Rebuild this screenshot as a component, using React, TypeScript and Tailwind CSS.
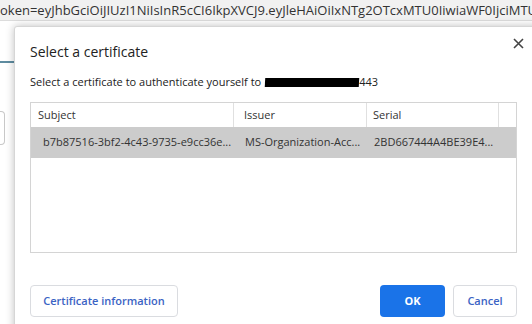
import React from 'react'

const font = { fontFamily: '"Open Sans", "Noto Sans", sans-serif' }

function CloseIcon() {
  return (
    <svg width="11" height="11" viewBox="0 0 11 11">
      <path d="M1 1 L10 10 M10 1 L1 10" stroke="#444" strokeWidth="1.6" />
    </svg>
  )
}

export default function App() {
  return (
    <div className="relative h-[324px] w-[532px] overflow-hidden bg-white" style={font}>
      <div className="h-[21px] overflow-hidden whitespace-nowrap border-b border-[#dcdcdc] bg-[#f1f1f1] text-[13px] leading-[20px] text-[#333]">
        oken=eyJhbGciOiJIUzI1NiIsInR5cCI6IkpXVCJ9.eyJleHAiOiIxNTg2OTcxMTU0IiwiaWF0IjciMTU4
      </div>
      <div className="mt-[40px] h-[2px] w-[14px] bg-[#5e8ca0]" />
      <div className="mt-[48px] h-[34px] w-[5px] rounded-r border border-l-0 border-[#c8c8c8]" />

      <div className="absolute left-[14px] top-[26px] h-[320px] w-[540px] rounded-l-[3px] border border-[#d6d6d6] bg-white shadow-[0_0_8px_rgba(0,0,0,0.25)]">
        <div className="relative">
          <div className="absolute left-[498px] top-[11px]">
            <CloseIcon />
          </div>
          <div className="pl-[15px] pt-[15px] text-[14px] leading-[20px] text-[#222]">Select a certificate</div>
          <div className="mt-[12px] flex items-center whitespace-nowrap pl-[15px] text-[11px] leading-[16px] text-[#222]">
            <span>Select a certificate to authenticate yourself to</span>
            <span className="ml-[4px] inline-block h-[9px] w-[94px] -skew-x-3 bg-black" />
            <span>443</span>
          </div>
          <div className="ml-[15px] mt-[12px] h-[151px] w-[487px] border border-[#d4d4d4] text-[11px] text-[#333]">
            <div className="flex h-[24px] items-center">
              <div className="flex h-full w-[203px] items-center border-r border-[#e0e0e0] pl-[7px]">Subject</div>
              <div className="flex h-full w-[133px] items-center border-r border-[#e0e0e0] pl-[10px]">Issuer</div>
              <div className="flex h-full w-[132px] items-center border-r border-[#e0e0e0] pl-[6px]">Serial</div>
            </div>
            <div className="flex h-[31px] items-center whitespace-nowrap bg-[#cccccc] text-[#333]">
              <div className="w-[203px] pl-[12px]">b7b87516-3bf2-4c43-9735-e9cc36e...</div>
              <div className="w-[133px] pl-[11px]">MS-Organization-Acc...</div>
              <div className="w-[132px] pl-[7px]">2BD667444A4BE39E4...</div>
            </div>
          </div>
          <div className="ml-[15px] mt-[32px] flex w-[487px] items-center">
            <button className="h-[32px] w-[148px] rounded-[4px] border border-[#dadce0] bg-white text-[11px] font-semibold text-[#3b63c4]">
              Certificate information
            </button>
            <div className="flex-1" />
            <button className="h-[32px] w-[65px] rounded-[4px] bg-[#1a73e8] text-[11px] font-bold text-white">OK</button>
            <button className="ml-[8px] h-[32px] w-[64px] rounded-[4px] border border-[#dadce0] bg-white text-[11px] font-semibold text-[#3b63c4]">
              Cancel
            </button>
          </div>
        </div>
      </div>
    </div>
  )
}
